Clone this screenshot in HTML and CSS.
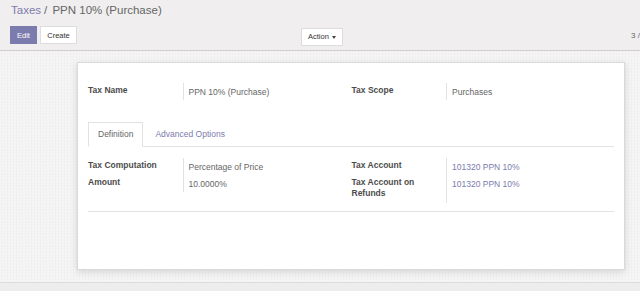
FILE: index.html
```html
<!DOCTYPE html>
<html lang="en">
<head>
  <meta charset="UTF-8" />
  <title>PPN 10% (Purchase)</title>
  <link rel="stylesheet" href="styles.css">
</head>
<body>

  <header class="control-panel">
    <ol class="breadcrumb">
      <li><a href="#">Taxes</a></li>
      <li class="active">PPN 10% (Purchase)</li>
    </ol>
    <div class="cp-row">
      <div class="cp-buttons">
        <button class="btn btn-primary">Edit</button>
        <button class="btn btn-default">Create</button>
      </div>
      <div class="cp-sidebar">
        <button class="btn btn-default">Action <span class="caret"></span></button>
      </div>
      <div class="cp-pager">3 /</div>
    </div>
  </header>

  <main class="form-view">
    <div class="sheet">

      <div class="group-row">
        <table class="group">
          <tr>
            <td class="label">Tax Name</td>
            <td class="value">PPN 10% (Purchase)</td>
          </tr>
        </table>
        <table class="group">
          <tr>
            <td class="label">Tax Scope</td>
            <td class="value">Purchases</td>
          </tr>
        </table>
      </div>

      <ul class="tabs">
        <li class="active"><a href="#">Definition</a></li>
        <li><a href="#">Advanced Options</a></li>
      </ul>

      <div class="tab-pane">
        <div class="group-row">
          <table class="group">
            <tr>
              <td class="label">Tax Computation</td>
              <td class="value">Percentage of Price</td>
            </tr>
            <tr>
              <td class="label">Amount</td>
              <td class="value">10.0000%</td>
            </tr>
          </table>
          <table class="group">
            <tr>
              <td class="label">Tax Account</td>
              <td class="value"><a href="#">101320 PPN 10%</a></td>
            </tr>
            <tr>
              <td class="label">Tax Account on Refunds</td>
              <td class="value"><a href="#">101320 PPN 10%</a></td>
            </tr>
          </table>
        </div>
      </div>

    </div>
  </main>

  <footer class="page-bottom"></footer>

</body>
</html>
```

FILE: styles.css
```css
:root {
  --color-primario: #7c7bad;
  --color-panel: #f0eeee;
  --color-texto: #4c4c4c;
  --color-valor: #666;
  --color-linea: #e2e2e2;
}

* {
  box-sizing: border-box;
}

html, body {
  height: 100%;
}

body {
  margin: 0;
  font-family: "Liberation Sans", Arial, sans-serif;
  color: var(--color-texto);
  background: #f4f4f4;
  overflow: hidden;
  display: flex;
  flex-direction: column;
}

a {
  color: var(--color-primario);
  text-decoration: none;
}

/* control panel */

.control-panel {
  background: var(--color-panel);
  border-bottom: 1px solid #cfcdcd;
  height: 51px;
  padding: 3px 0 0 11px;
  flex: none;
}

.breadcrumb {
  list-style: none;
  margin: 0;
  padding: 0;
  display: flex;
  font-size: 11.5px;
  line-height: 15px;
}

.breadcrumb li.active {
  color: #666;
}

.breadcrumb li + li:before {
  content: "/\00a0";
  padding: 0 2px 0 3px;
  color: #666;
}

.cp-row {
  display: grid;
  grid-template-columns: 291px 330px auto;
  margin: 7px 0 0 -1px;
  align-items: center;
  white-space: nowrap;
}

.cp-buttons {
  display: flex;
  gap: 3px;
}

.btn {
  font-family: inherit;
  font-size: 7.5px;
  height: 18px;
  padding: 0 6px;
  border-radius: 0;
  border: 1px solid #ddd;
  background: #fff;
  color: #333;
  cursor: pointer;
}

.btn-primary {
  background: var(--color-primario);
  border-color: var(--color-primario);
  color: #fff;
  width: 27px;
  padding: 0;
}

.cp-buttons .btn-default {
  width: 37px;
  padding: 0;
}

.cp-sidebar .btn {
  width: 42px;
  padding: 0;
}

.caret {
  display: inline-block;
  width: 0;
  height: 0;
  margin-left: 1px;
  vertical-align: middle;
  border-top: 3px solid #444;
  border-left: 2.5px solid transparent;
  border-right: 2.5px solid transparent;
}

.cp-pager {
  font-size: 8px;
  color: #666;
}

/* form */

.form-view {
  flex: 1;
  background-color: #f4f4f4;
  background-image: repeating-conic-gradient(#f0f0f0 0 25%, #f7f7f7 0 50%);
  background-size: 3px 3px;
  padding: 11px 0 0 77px;
}

.sheet {
  width: 548px;
  height: 208px;
  background: #fff;
  border: 1px solid #dadada;
  box-shadow: 0 2px 7px rgba(0, 0, 0, 0.13);
  padding: 20px 10px 0 10px;
}

.group-row {
  display: grid;
  grid-template-columns: 263.5px 263.5px;
  align-items: start;
}

.group {
  border-collapse: collapse;
  font-size: 8.5px;
  line-height: 11px;
}

.group td {
  vertical-align: top;
  padding: 0 0 4px 0;
}

.group .label {
  width: 95px;
  padding-right: 16px;
  padding-top: 1px;
  font-weight: bold;
  color: var(--color-texto);
}

.group .value {
  border-left: 1px solid var(--color-linea);
  padding-left: 5px;
  padding-top: 2px;
  color: var(--color-valor);
}

.group-row:first-child .label {
  padding-top: 2px;
}

.group-row:first-child .value {
  padding-top: 4px;
  padding-bottom: 2px;
}

.tabs {
  list-style: none;
  margin: 22px 0 0 0;
  padding: 0;
  display: flex;
  border-bottom: 1px solid var(--color-linea);
  font-size: 8.5px;
}

.tabs li {
  margin: 0 2px -1px 0;
}

.tabs a {
  display: block;
  height: 25px;
  line-height: 23px;
  padding: 0 9px;
  border: 1px solid transparent;
}

.tabs li.active a {
  color: #666;
  background: #fff;
  border-color: var(--color-linea);
  border-bottom-color: #fff;
}

.tab-pane {
  padding-top: 11px;
  height: 65px;
  border-bottom: 1px solid var(--color-linea);
}

.page-bottom {
  flex: none;
  height: 9px;
  background: #eeeded;
  border-top: 1px solid #dcdcdc;
}
```
